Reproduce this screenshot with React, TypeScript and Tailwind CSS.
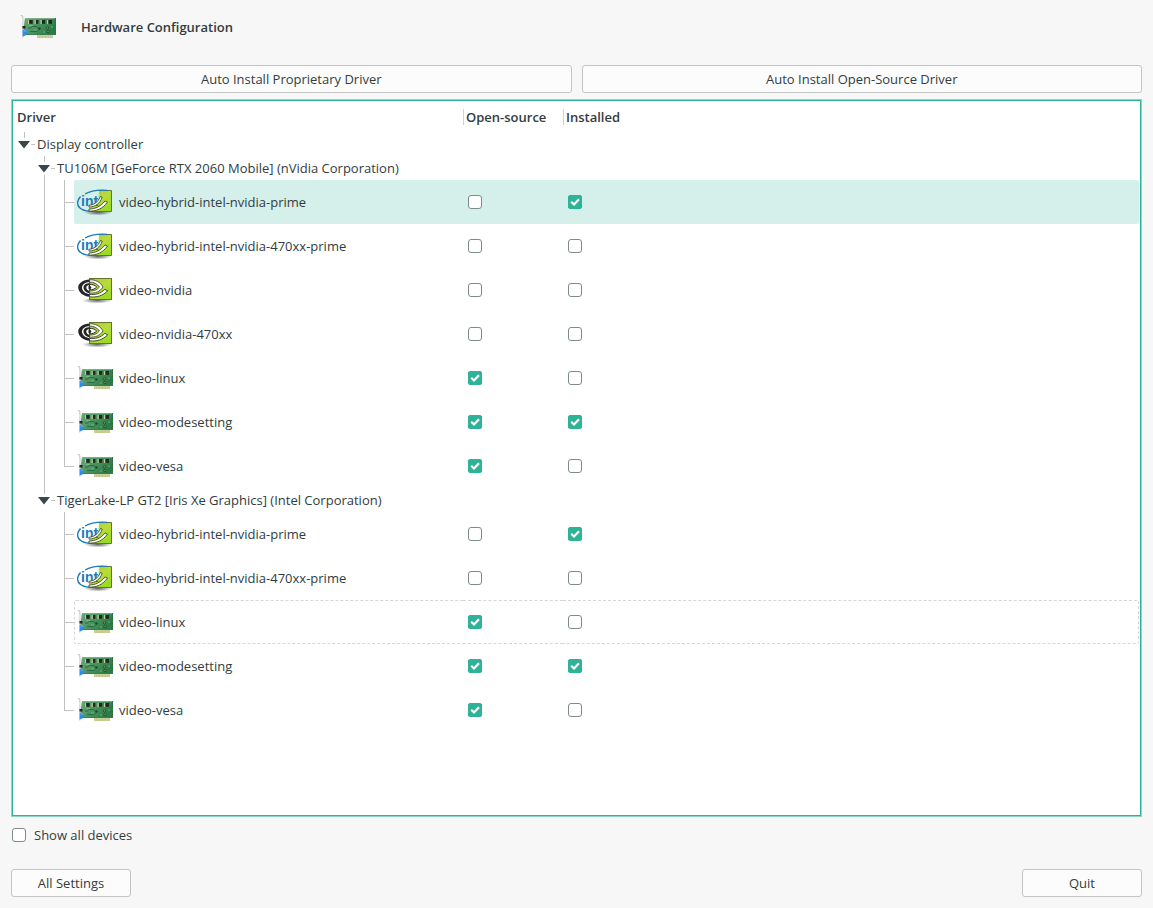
import React, { useState } from "react";

type IconKind = "hybrid" | "nvidia" | "card";

interface Driver {
    name: string;
    icon: IconKind;
    openSource: boolean;
    installed: boolean;
}

interface Device {
    name: string;
    drivers: Driver[];
}

const devices: Device[] = [
    {
        name: "TU106M [GeForce RTX 2060 Mobile] (nVidia Corporation)",
        drivers: [
            { name: "video-hybrid-intel-nvidia-prime", icon: "hybrid", openSource: false, installed: true },
            { name: "video-hybrid-intel-nvidia-470xx-prime", icon: "hybrid", openSource: false, installed: false },
            { name: "video-nvidia", icon: "nvidia", openSource: false, installed: false },
            { name: "video-nvidia-470xx", icon: "nvidia", openSource: false, installed: false },
            { name: "video-linux", icon: "card", openSource: true, installed: false },
            { name: "video-modesetting", icon: "card", openSource: true, installed: true },
            { name: "video-vesa", icon: "card", openSource: true, installed: false },
        ],
    },
    {
        name: "TigerLake-LP GT2 [Iris Xe Graphics] (Intel Corporation)",
        drivers: [
            { name: "video-hybrid-intel-nvidia-prime", icon: "hybrid", openSource: false, installed: true },
            { name: "video-hybrid-intel-nvidia-470xx-prime", icon: "hybrid", openSource: false, installed: false },
            { name: "video-linux", icon: "card", openSource: true, installed: false },
            { name: "video-modesetting", icon: "card", openSource: true, installed: true },
            { name: "video-vesa", icon: "card", openSource: true, installed: false },
        ],
    },
];

// Shared gradients, referenced by id from every icon
const IconDefs = () => (
    <svg width="0" height="0" className="absolute" aria-hidden="true">
        <defs>
            <linearGradient id="lime" x1="0" y1="0" x2="0.6" y2="1">
                <stop offset="0" stopColor="#a9c43a" />
                <stop offset="0.5" stopColor="#b9dc3c" />
                <stop offset="1" stopColor="#9adb22" />
            </linearGradient>
            <linearGradient id="board" x1="0" y1="0" x2="1" y2="0.4">
                <stop offset="0" stopColor="#6aa878" />
                <stop offset="0.5" stopColor="#4a9561" />
                <stop offset="1" stopColor="#2a7c46" />
            </linearGradient>
            <radialGradient id="shade">
                <stop offset="0" stopColor="#000" stopOpacity="0.6" />
                <stop offset="1" stopColor="#000" stopOpacity="0" />
            </radialGradient>
        </defs>
    </svg>
);

const CardIcon = () => (
    <svg viewBox="0 0 36 28" className="h-7 w-9 shrink-0" aria-hidden="true">
        <path d="M.7 2.500h1.300l.8 1.500v20.500" fill="none" stroke="#c6c9c8" strokeWidth="1.2" />
        <path d="M2.500 6c2 1.500 0 5 1.300 7" fill="none" stroke="#e3e5e4" strokeWidth="2.200" />
        <rect x="17" y="21.500" width="16" height="3.500" fill="#c9cf95" />
        <path d="M19.500 23v2M22.500 23v2M25.500 23v2M28.500 23v2M31 23v2" stroke="#b9c085" strokeWidth="0.7" />
        <path d="M5 5h31v17H3.500v-7z" fill="url(#board)" />
        <path d="M5 5.500h31" stroke="#86b893" strokeWidth="0.8" />
        <path d="M35.500 5v17" stroke="#2d7546" />
        <path d="M4 21.500h32" stroke="#3b7a50" strokeWidth="0.8" />
        <g fill="#c3ca8c">
            <rect x="8" y="7" width="1.200" height="4" />
            <rect x="14.500" y="7" width="1.200" height="4" />
            <rect x="20.500" y="7" width="1.200" height="4" />
            <rect x="27" y="7" width="1.200" height="4" />
        </g>
        <g fill="#1f2722">
            <rect x="9.200" y="7" width="3.500" height="3.800" />
            <rect x="16" y="7" width="2.400" height="3.800" />
            <rect x="22" y="7" width="3.200" height="3.800" />
            <rect x="28.500" y="7" width="3.500" height="3.800" />
            <rect x="2.500" y="13" width="3" height="2.500" />
        </g>
        <path d="M8 15h3l1-1.500h5l1.500 2M10 18.500h7l2-2" fill="none" stroke="#24603a" strokeWidth="0.800" />
        <circle cx="19.500" cy="15.500" r="1.200" fill="#1c4a2b" />
        <path d="M9 12.500h4M14 17h3M23 19h2M31 14h2" stroke="#8dc19a" strokeWidth="0.700" />
        <circle cx="27.500" cy="14.800" r="1.200" fill="#7e9a55" stroke="#1d4429" strokeWidth="0.800" />
        <circle cx="28" cy="18.500" r="1.200" fill="#7e9a55" stroke="#1d4429" strokeWidth="0.800" />
        <path d="M2.700 17h4.300v4l-1 .5-.5 1-2.800 1z" fill="#2f8bea" />
        <path d="M3.500 18h3" stroke="#7fc0ff" strokeWidth="0.800" />
    </svg>
);

const NvidiaIcon = () => (
    <svg viewBox="0 0 36 28" className="h-7 w-9 shrink-0" aria-hidden="true">
        <ellipse cx="20" cy="24.500" rx="15" ry="3" fill="url(#shade)" />
        <rect x="12.500" y="2.500" width="22" height="21" fill="url(#lime)" stroke="#66752e" />
        <path d="M12.500 3.600C6 3.800 1.200 7.500 1.200 11.300c0 5 5 8.900 11.300 9.500v-2.600C8 17.500 5 14.800 5 11.500c0-3 3.500-5.400 7.500-5.600z" fill="#262626" />
        <path d="M12.500 7c-3.500.2-6 2-6 4.400 0 3 2.700 5.300 6 5.700v-2.300c-1.800-.5-3.200-1.700-3.200-3.400 0-1.300 1.400-2.200 3.200-2.300z" fill="#262626" />
        <path d="M12.500 3.800c6-.4 11 2.400 13.500 7.200-3 4.500-7.500 6.600-13.500 6v-2c3.800.4 7.500-1 10-4-2.300-3.200-5.800-5-10-4.900z" fill="#fff" stroke="#333b1f" strokeWidth="0.800" />
        <path d="M12.500 8.400c3.200-.2 5.600.8 7.200 2.600-1.800 2-4.200 3-7.200 2.700z" fill="#fff" stroke="#262626" strokeWidth="1" />
        <path d="M11.500 9.800c1.600-.3 2.800.6 2.800 1.700s-1.200 1.800-2.800 1.500z" fill="#262626" />
        <path d="M12.500 18.400c6 .7 11-.9 15.300-5l3 1.300c-4.800 5-11 7-18.300 6.100z" fill="#fff" stroke="#333b1f" strokeWidth="0.900" />
    </svg>
);

const HybridIcon = () => (
    <svg viewBox="0 0 36 28" className="h-7 w-9 shrink-0" aria-hidden="true">
        <ellipse cx="21" cy="24.500" rx="14" ry="3" fill="url(#shade)" />
        <path d="M22 2.500h12.500v21h-22v-3l9-9z" fill="url(#lime)" />
        <path d="M21 2.500h13.500v21h-22" fill="none" stroke="#66752e" />
        <path d="M3.500 8.500C0 12.500-.4 17 3 20c2.200 2 5.500 3 9.500 3.200" fill="none" stroke="#1a7dbd" strokeWidth="1.500" />
        <path d="M8 6C13 3 20 1.600 30 2.300" fill="none" stroke="#1a7dbd" strokeWidth="1.300" />
        <text x="4" y="18" fill="#1a7dbd" fontFamily="Liberation Sans, sans-serif" fontWeight="700" fontSize="14">int</text>
        <path d="M12 17.200c4.500 0 9-3 11.500-8.700l1.700.7c-2.200 6.300-6.700 9.600-13.200 9.900z" fill="#fff" stroke="#3f4728" strokeWidth="0.900" />
        <path d="M12 21c6.500 0 11.500-2.600 16-8l2.500 1c-4.500 6.500-10.500 9.200-18.500 9.200z" fill="#fff" stroke="#3f4728" strokeWidth="0.900" />
    </svg>
);

const icons: Record<IconKind, React.FC> = {
    hybrid: HybridIcon,
    nvidia: NvidiaIcon,
    card: CardIcon,
};

const CheckBox: React.FC<{
    label: string;
    defaultChecked?: boolean;
    showLabel?: boolean;
}> = ({ label, defaultChecked = false, showLabel = false }) => (
    <label className="inline-flex items-center gap-2">
        <span className="relative flex h-3.5 w-3.5">
            <input
                type="checkbox"
                defaultChecked={defaultChecked}
                aria-label={label}
                className="peer h-3.5 w-3.5 appearance-none rounded-[3px] border border-[#7d8b8a] bg-white checked:rounded-xs checked:border-[#2eb398] checked:bg-[#2eb398]"
            />
            <svg viewBox="0 0 14 14" className="pointer-events-none absolute inset-0 hidden peer-checked:block" aria-hidden="true">
                <path d="M3.200 6.800 6 9.500l5-5.300" fill="none" stroke="#fff" strokeWidth="2.200" />
            </svg>
        </span>
        {showLabel && <span>{label}</span>}
    </label>
);

const Button: React.FC<{ children: string; className: string }> = ({ children, className }) => (
    <button type="button" className={`h-7 rounded-[3px] border border-[#c3c5c5] bg-[#fcfcfc] ${className}`}>
        {children}
    </button>
);

// Tree rail with the vertical guide running through its 12th pixel
const Rail: React.FC<{ line?: "full" | "half" | "none"; branch?: boolean }> = ({ line = "none", branch = false }) => (
    <span className={`flex h-full shrink-0 pl-[11px] ${branch ? "w-[21px]" : "w-5"}`}>
        <span className={`w-px bg-[#c1c3c3] ${line === "full" ? "h-full" : line === "half" ? "h-[23px]" : "h-0"}`} />
        {branch && <span className="mt-[22px] h-px flex-1 bg-[#c1c3c3]" />}
    </span>
);

const Toggle: React.FC<{ open: boolean; more?: boolean; label: string; onClick: () => void }> = ({ open, more = false, label, onClick }) => (
    <button type="button" aria-label={label} aria-expanded={open} onClick={onClick} className="h-6 w-6 shrink-0">
        <svg viewBox="0 0 24 24" className="h-6 w-6" aria-hidden="true">
            <path d="M11.500 0v6M18 12.500h4" stroke="#c1c3c3" />
            {more && <path d="M11.500 19v5" stroke="#c1c3c3" />}
            <path d={open ? "M5 9h12l-6 7.500z" : "M8 6v12l8-6z"} fill="#3a4649" />
        </svg>
    </button>
);

const DriverRow: React.FC<{
    driver: Driver;
    last: boolean;
    parentContinues: boolean;
    selected: boolean;
    focused: boolean;
    onSelect: () => void;
}> = ({ driver, last, parentContinues, selected, focused, onSelect }) => {
    const Icon = icons[driver.icon];
    const tone = `${selected ? "bg-[#d5efea]" : ""} ${focused ? "border-y border-dashed border-[#d5d7d7]" : ""}`;

    return (
        <tr onClick={onSelect}>
            <td className="p-0">
                <div className="flex h-11">
                    <Rail />
                    <Rail line={parentContinues ? "full" : "none"} />
                    <Rail line={last ? "half" : "full"} branch />
                    <div className={`flex flex-1 items-center gap-1.5 rounded-l-xs ${tone} ${focused ? "border-l pl-0.5" : "pl-[3px]"}`}>
                        <Icon />
                        <span>{driver.name}</span>
                    </div>
                </div>
            </td>
            <td className="p-0">
                <div className={`flex h-11 items-center pl-[5px] ${tone}`}>
                    <CheckBox label={`${driver.name} open-source`} defaultChecked={driver.openSource} />
                </div>
            </td>
            <td className="p-0">
                <div className={`mr-px flex h-11 items-center rounded-r-xs pl-[5px] ${tone} ${focused ? "border-r" : ""}`}>
                    <CheckBox label={`${driver.name} installed`} defaultChecked={driver.installed} />
                </div>
            </td>
        </tr>
    );
};

const App: React.FC = () => {
    const [rootOpen, setRootOpen] = useState(true);
    const [closed, setClosed] = useState<number[]>([]);
    const [selected, setSelected] = useState("0-0");

    const toggleDevice = (idx: number) =>
        setClosed((list) => (list.includes(idx) ? list.filter((i) => i !== idx) : [...list, idx]));

    return (
        <div className="flex min-h-screen flex-col bg-[#f7f7f7] px-[11px] pb-[11px] font-['Open_Sans','Noto_Sans',sans-serif] text-[13px] leading-5 text-[#323c3f]">
            <IconDefs />

            <header className="flex h-[65px] items-center gap-[25px] pb-[11px] pl-[9px]">
                <CardIcon />
                <h1 className="font-semibold">Hardware Configuration</h1>
            </header>

            <div className="flex gap-2.5">
                <Button className="flex-1">Auto Install Proprietary Driver</Button>
                <Button className="flex-1">Auto Install Open-Source Driver</Button>
            </div>

            <main className="mt-1.5 flex-1 border border-[#90d5c8] bg-white inset-ring inset-ring-[#2eb398] p-px">
                <table className="w-full table-fixed border-collapse text-left">
                    <colgroup>
                        <col className="w-[450px]" />
                        <col className="w-[100px]" />
                        <col />
                    </colgroup>
                    <thead>
                        <tr className="h-[31px]">
                            <th className="p-0 pl-1 font-semibold">Driver</th>
                            <th className="p-0 font-semibold">
                                <div className="flex h-4 items-center border-l border-[#d0d2d2] pl-0.5">Open-source</div>
                            </th>
                            <th className="p-0 font-semibold">
                                <div className="flex h-4 items-center border-l border-[#d0d2d2] pl-0.5">Installed</div>
                            </th>
                        </tr>
                    </thead>
                    <tbody>
                        <tr>
                            <td colSpan={3} className="p-0">
                                <div className="flex h-6 items-center">
                                    <Toggle open={rootOpen} label="Display controller" onClick={() => setRootOpen(!rootOpen)} />
                                    <span>Display controller</span>
                                </div>
                            </td>
                        </tr>
                        {rootOpen && devices.map((device, idx) => {
                            const open = !closed.includes(idx);
                            const more = idx < devices.length - 1;

                            return (
                                <React.Fragment key={device.name}>
                                    <tr>
                                        <td colSpan={3} className="p-0">
                                            <div className="flex h-6 items-center">
                                                <Rail />
                                                <Toggle open={open} more={more} label={device.name} onClick={() => toggleDevice(idx)} />
                                                <span>{device.name}</span>
                                            </div>
                                        </td>
                                    </tr>
                                    {open && device.drivers.map((driver, i) => (
                                        <DriverRow
                                            key={driver.name}
                                            driver={driver}
                                            last={i === device.drivers.length - 1}
                                            parentContinues={more}
                                            selected={selected === `${idx}-${i}`}
                                            focused={idx === 1 && i === 2}
                                            onSelect={() => setSelected(`${idx}-${i}`)}
                                        />
                                    ))}
                                </React.Fragment>
                            );
                        })}
                    </tbody>
                </table>
            </main>

            <div className="flex h-9 items-center pl-px">
                <CheckBox label="Show all devices" showLabel />
            </div>

            <footer className="mt-4 flex justify-between">
                <Button className="w-[120px]">All Settings</Button>
                <Button className="w-[120px]">Quit</Button>
            </footer>
        </div>
    );
};

export default App;
